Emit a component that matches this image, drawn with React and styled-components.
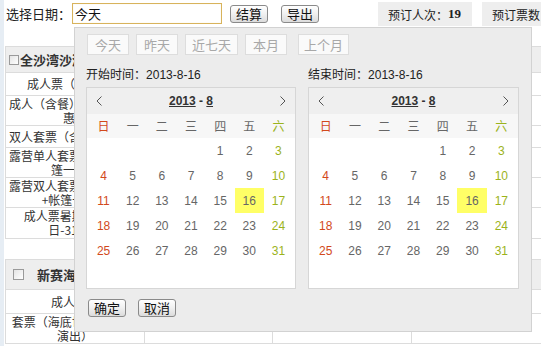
import React from 'react';
import styled, { createGlobalStyle } from 'styled-components';

const Global = createGlobalStyle`
  html, body { margin: 0; padding: 0; }
  body {
    font-family: "Liberation Sans", "Noto Sans CJK SC", sans-serif;
    font-size: 12px;
    color: #333;
    background: #fff;
  }
  * { box-sizing: border-box; }
`;

const CJK = `"Noto Sans CJK SC", "Liberation Sans", sans-serif`;

const Page = styled.div`
  position: relative;
  width: 541px;
  height: 346px;
  overflow: hidden;
  background: linear-gradient(to right, #e6edf4 0, #e6edf4 4px, #fff 4px);
`;

const TopBar = styled.div`
  display: flex;
  align-items: center;
  height: 28px;
  padding-left: 6px;
  font-family: ${CJK};
  font-size: 13px;
  color: #222;
  white-space: nowrap;
  & > * { flex-shrink: 0; }
`;

const Label = styled.span`
  width: 66px;
  line-height: 16px;
`;

const DateInput = styled.div`
  width: 150px;
  height: 21px;
  margin-top: -1px;
  border: 1px solid #d8b35c;
  padding-left: 2px;
  display: flex;
  align-items: center;
  background: #fff;
  color: #111;
  box-shadow: inset 0 0 1px rgba(220, 180, 90, 0.4);
`;

const Btn = styled.button`
  height: 18px;
  width: 38px;
  margin-left: ${p => p.$ml || 0}px;
  padding: 0;
  border: 1px solid #8a8a8a;
  border-radius: 3px;
  background: linear-gradient(#ffffff, #f0f0f0 50%, #dcdcdc);
  font-family: ${CJK};
  font-size: 13px;
  line-height: 16px;
  color: #111;
`;

const Stat = styled.div`
  height: 24px;
  margin-left: ${p => p.$ml}px;
  padding: 0 ${p => p.$pr}px 0 ${p => p.$pl}px;
  background: #eeeeee;
  display: flex;
  align-items: center;
  font-size: 12px;
  color: #222;
  b { font-family: "Liberation Serif", serif; font-weight: bold; font-size: 13px; }
`;

const Content = styled.div`
  padding: 18px 0 0 5px;
  display: flex;
  flex-direction: column;
  gap: 20px;
`;

const Table = styled.table`
  width: 560px;
  border-collapse: collapse;
  table-layout: fixed;
  font-family: ${CJK};
  font-size: 12px;
  color: #333;
  td {
    border: 1px solid #dcdcdc;
    padding: 0 3px;
    text-align: center;
    line-height: 14px;
    white-space: nowrap;
    overflow: hidden;
  }
`;

const HeadCell = styled.td`
  && {
    background: #eeeeee;
    text-align: left;
    height: ${p => p.$h}px;
    padding-left: ${p => p.$pl}px;
    font-size: 13px;
    font-weight: bold;
    color: #333;
  }
`;

const Row = styled.tr`
  height: ${p => p.$h}px;
`;

const Check = styled.span`
  display: inline-block;
  vertical-align: middle;
  width: ${p => p.$s}px;
  height: ${p => p.$s}px;
  margin-right: ${p => p.$mr}px;
  border: 1px solid #9a9a9a;
  background: linear-gradient(135deg, #e4e4e4, #ffffff);
  position: relative;
  top: -1px;
`;

const Popup = styled.div`
  position: absolute;
  left: 74px;
  top: 27px;
  width: 458px;
  height: 305px;
  border: 1px solid #d2d2d2;
  background: #ececec;
  padding: 6px 13px 0 11px;
  display: flex;
  flex-direction: column;
`;

const QuickRow = styled.div`
  display: flex;
  gap: 7px;
  padding-left: 1px;
`;

const Quick = styled.span`
  height: 21px;
  padding: 0 ${p => p.$px}px;
  margin-right: ${p => p.$mr || 0}px;
  border: 1px solid #dddddd;
  background: #fafafa;
  color: #a8a8a8;
  font-family: ${CJK};
  font-size: 13px;
  display: flex;
  align-items: center;
`;

const Panels = styled.div`
  display: flex;
  gap: 12px;
  margin-top: 12px;
`;

const Panel = styled.div`
  display: flex;
  flex-direction: column;
  gap: 6px;
`;

const PanelLabel = styled.div`
  height: 14px;
  line-height: 14px;
  font-family: ${CJK};
  font-size: 12px;
  color: #222;
  span { font-family: "Liberation Sans", sans-serif; }
`;

const Cal = styled.div`
  width: ${p => p.$w}px;
  border: 1px solid #d6d6d6;
  background: #fff;
  font-family: "Liberation Sans", sans-serif;
`;

const CalHead = styled.div`
  height: 26px;
  background: #efefef;
  display: flex;
  align-items: center;
  justify-content: space-between;
  padding: 0 9px 0 9px;
`;

const Title = styled.div`
  font-weight: bold;
  font-size: 12px;
  color: #333;
  u { text-decoration: underline; }
`;

const Grid = styled.div`
  display: grid;
  grid-template-columns: repeat(7, 1fr);
  padding: 0 2px 0 2px;
  background: ${p => p.$bg || '#fff'};
`;

const Cell = styled.div`
  height: ${p => p.$h}px;
  line-height: 14px;
  display: flex;
  align-items: center;
  justify-content: center;
  font-family: ${p => (p.$cjk ? CJK : '"Liberation Sans", sans-serif')};
  font-size: 12px;
  color: ${p => (p.$tone === 'sun' ? '#d2491c' : p.$tone === 'sat' ? '#9bb31c' : '#666')};
  background: ${p => (p.$sel ? '#ffff66' : 'transparent')};
`;

const Actions = styled.div`
  display: flex;
  gap: 12px;
  margin-top: 10px;
  padding-left: 2px;
`;

const Chevron = ({ dir }) => (
  <svg width="6" height="10" viewBox="0 0 6 10">
    <path
      d={dir === 'left' ? 'M5.5 0.5 L1 5 L5.5 9.5' : 'M0.5 0.5 L5 5 L0.5 9.5'}
      fill="none"
      stroke="#555"
      strokeWidth="1"
    />
  </svg>
);

const WEEK = ['日', '一', '二', '三', '四', '五', '六'];
const cells = [
  ...Array(4).fill(null),
  ...Array.from({ length: 31 }, (_, i) => i + 1),
  ...Array(7).fill(null),
];

const tone = i => (i % 7 === 0 ? 'sun' : i % 7 === 6 ? 'sat' : 'wk');

function Calendar({ label, w }) {
  return (
    <Panel>
      <PanelLabel>
        {label}：<span>2013-8-16</span>
      </PanelLabel>
      <Cal $w={w}>
        <CalHead>
          <Chevron dir="left" />
          <Title>
            <u>2013</u> - <u>8</u>
          </Title>
          <Chevron dir="right" />
        </CalHead>
        <Grid $bg="#f7f7f7">
          {WEEK.map((d, i) => (
            <Cell key={d} $h={24} $cjk $tone={tone(i)}>
              {d}
            </Cell>
          ))}
        </Grid>
        <Grid>
          {cells.map((d, i) => (
            <Cell key={i} $h={25} $tone={tone(i)} $sel={d === 16}>
              {d}
            </Cell>
          ))}
        </Grid>
      </Cal>
    </Panel>
  );
}

const rows1 = [
  { h: 23, lines: ['成人票（早鸟价）'] },
  { h: 30, lines: ['成人（含餐）门票特价优', '惠价'] },
  { h: 22, lines: ['双人套票（含双早）特惠'] },
  { h: 30, lines: ['露营单人套票（含单人帐', '篷一顶）'] },
  { h: 30, lines: ['露营双人套票（含双人套', '+帐篷一顶）'] },
  { h: 31, lines: ['成人票暑期价（7月', '日-31日）'] },
];

const rows2 = [
  { h: 24, lines: ['成人票价'] },
  { h: 30, lines: ['套票（海底世界+海豚表', '演出）'] },
];

function Lines({ lines }) {
  return lines.map((l, i) => (
    <React.Fragment key={i}>
      {i > 0 && <br />}
      {l}
    </React.Fragment>
  ));
}

function DataRows({ rows }) {
  return rows.map((r, i) => (
    <Row key={i} $h={r.h}>
      <td>
        <Lines lines={r.lines} />
      </td>
      <td></td>
      <td></td>
      <td></td>
    </Row>
  ));
}

const Cols = () => (
  <colgroup>
    <col style={{ width: 139 }} />
    <col style={{ width: 128 }} />
    <col style={{ width: 139 }} />
    <col />
  </colgroup>
);

export default function App() {
  return (
    <Page>
      <Global />
      <TopBar>
        <Label>选择日期：</Label>
        <DateInput>今天</DateInput>
        <Btn $ml={8}>结算</Btn>
        <Btn $ml={13}>导出</Btn>
        <Stat $ml={59} $pl={10} $pr={11}>
          预订人次：<b>19</b>
        </Stat>
        <Stat $ml={10} $pl={10} $pr={10}>
          预订票数
        </Stat>
      </TopBar>
      <Content>
        <Table>
          <Cols />
          <tbody>
            <tr>
              <HeadCell colSpan={4} $h={26} $pl={3}>
                <Check $s={10} $mr={1} />
                全沙湾沙滩公园
              </HeadCell>
            </tr>
            <DataRows rows={rows1} />
          </tbody>
        </Table>
        <Table>
          <Cols />
          <tbody>
            <tr>
              <HeadCell colSpan={4} $h={30} $pl={7}>
                <Check $s={11} $mr={13} />
                新赛海海洋馆
              </HeadCell>
            </tr>
            <DataRows rows={rows2} />
          </tbody>
        </Table>
      </Content>
      <Popup>
        <QuickRow>
          <Quick $px={7}>今天</Quick>
          <Quick $px={7}>昨天</Quick>
          <Quick $px={6}>近七天</Quick>
          <Quick $px={7} $mr={4}>本月</Quick>
          <Quick $px={5}>上个月</Quick>
        </QuickRow>
        <Panels>
          <Calendar label="开始时间" w={210} />
          <Calendar label="结束时间" w={211} />
        </Panels>
        <Actions>
          <Btn>确定</Btn>
          <Btn>取消</Btn>
        </Actions>
      </Popup>
    </Page>
  );
}
